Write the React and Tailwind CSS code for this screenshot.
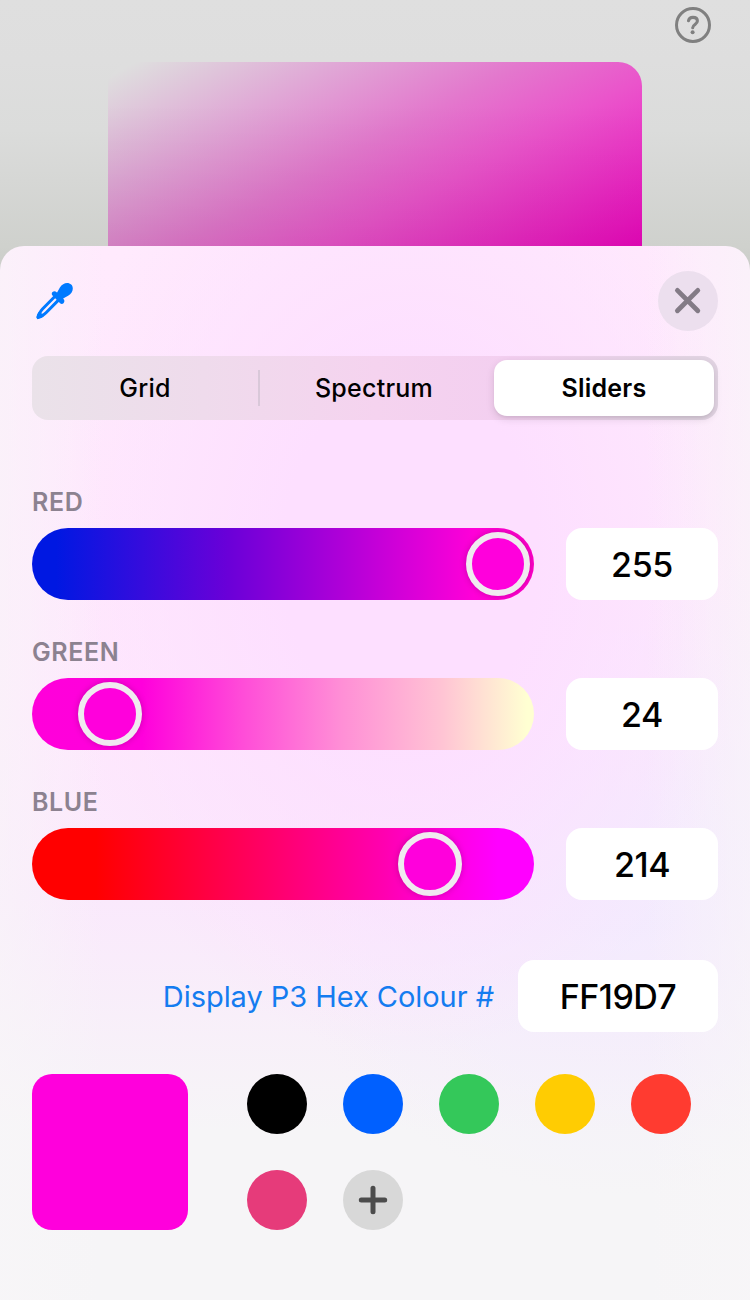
import React from "react";

const channels = [
  {
    name: "RED",
    value: "255",
    track: "bg-[linear-gradient(90deg,#0018e2_0px,#0018e2_24px,#6a00d8_196px,#ff00d8_442px,#ff00c8_502px)]",
    thumb: "left-[434px]",
  },
  {
    name: "GREEN",
    value: "24",
    track: "bg-[linear-gradient(90deg,#ff00da_0px,#ff00dc_110px,#ff4cd8_210px,#ff8fd6_310px,#ffc4d4_410px,#ffffd2_495px)]",
    thumb: "left-[46px]",
  },
  {
    name: "BLUE",
    value: "214",
    track: "bg-[linear-gradient(90deg,#ff0000_0px,#ff0000_64px,#ff0065_232px,#ff00b0_352px,#ff00d8_404px,#ff00ff_466px)]",
    thumb: "left-[366px]",
  },
];

const swatches = ["bg-black", "bg-[#0060ff]", "bg-[#34c85a]", "bg-[#ffcc02]", "bg-[#ff3b30]", "bg-[#e63b7a]"];

function HelpIcon() {
  return (
    <svg width="36" height="36" viewBox="0 0 36 36" fill="none" stroke="#808080" strokeLinecap="round" strokeLinejoin="round">
      <circle cx="18" cy="18" r="16.5" strokeWidth="3" />
      <path d="M13.5 13.8c.4-2.2 2-3.4 4.4-3.4 2.6 0 4.5 1.4 4.5 3.7 0 3.3-4.7 3.4-4.7 6.6" strokeWidth="3.1" />
      <circle cx="17.6" cy="25.3" r="2" fill="#808080" stroke="none" />
    </svg>
  );
}

function DropperIcon() {
  return (
    <svg width="38" height="38" viewBox="0 0 38 38" fill="none">
      <path
        d="M19.6 14.8 7.5 27c-1.5 1.5-2.4 3-3 4.6L3 35.2l3.4-1.4c1.6-.7 3.1-1.6 4.6-3.1L23.2 18.4"
        stroke="#007aff"
        strokeWidth="3"
        strokeLinejoin="round"
      />
      <path
        d="M17.5 10.1c1.3-1.2 2.9-1.1 4.1.1l.5.4 2.8-5c2.8-5.2 8.6-5.9 11.3-3.1 2.8 2.8 2 8.6-3.1 11.3l-5 2.8.4.5c1.2 1.2 1.2 2.8 0 4.1-1 1-2.4 1-3.4 0l-7.6-7.7c-1-1-1-2.4 0-3.4z"
        fill="#007aff"
      />
      <path d="M1.7 34.2c.3-1.5 1.1-3.2 2.5-5l5 4.9c-2 1.8-3.6 2.5-5.9 3-1.3.3-2-1-1.6-2.9z" fill="#007aff" />
    </svg>
  );
}

function Slider({ channel }) {
  return (
    <div className="flex flex-col">
      <div className="h-[38px] text-[25px] leading-6 font-semibold tracking-[0.6px] text-[#8c8290]">{channel.name}</div>
      <div className="flex justify-between">
        <div className={`relative h-[72px] w-[502px] overflow-hidden rounded-full ${channel.track}`}>
          <div className={`absolute top-1 size-16 rounded-full border-[6px] border-[#f0eaf0] bg-[#ff00dc] shadow-[0_0_6px_rgba(60,0,50,0.28)] ${channel.thumb}`} />
        </div>
        <div className="flex h-[72px] w-[152px] items-center justify-center rounded-2xl bg-white text-[34px] font-medium tracking-[-0.4px]">
          {channel.value}
        </div>
      </div>
    </div>
  );
}

export default function App() {
  return (
    <div className="flex h-[1300px] w-[750px] flex-col overflow-hidden bg-[#e0e0e0] font-['Inter',sans-serif] text-black">
      <div className="-mb-6 flex h-[270px] shrink-0 flex-col bg-[linear-gradient(180deg,#dfdfdf_0px,#dedede_60px,#dbdcdb_130px,#d6d7d5_180px,#cfd1cd_246px,#cbcdc9_270px)]">
        <div className="flex h-[62px] justify-end pt-[7px] pr-[39px]">
          <HelpIcon />
        </div>
        <div className="mx-auto h-[208px] w-[534px] rounded-t-[24px] bg-[linear-gradient(180deg,rgba(0,0,0,0)_20%,rgba(0,0,0,0.08)_90%),linear-gradient(152deg,#dedede_3%,#e0a8d6_25%,#e378cd_45%,#ea55cb_61%,#ee00be_98%)]" />
      </div>

      <div className="relative flex h-[1054px] shrink-0 flex-col rounded-t-[24px] bg-[#f6f6f7] bg-[linear-gradient(90deg,rgba(248,246,248,0.6)_0%,rgba(248,246,248,0)_14%,rgba(248,246,248,0)_86%,rgba(248,246,248,0.6)_100%),radial-gradient(ellipse_360px_500px_at_410px_310px,#fddfff_0%,#fddfff_35%,rgba(253,224,255,0)_100%),radial-gradient(ellipse_360px_330px_at_620px_620px,rgba(241,235,255,0.85)_0%,rgba(241,235,255,0)_100%),linear-gradient(180deg,#ffeafd_0%,#fee8fd_45%,#fae9fc_62%,#f6f5f7_84%)] px-8 pt-[25px]">
        <header className="flex h-[60px] items-center justify-between">
          <div className="pl-[3px]">
            <DropperIcon />
          </div>
          <div className="flex size-[60px] items-center justify-center rounded-full bg-[#ecdfee]">
            <svg width="28" height="28" viewBox="0 0 28 28" stroke="#837b86" strokeWidth="4.8" strokeLinecap="round">
              <path d="M3.4 3.4l20.4 20.4M23.8 3.4 3.4 23.8" />
            </svg>
          </div>
        </header>

        <nav className="mt-[25px] flex h-16 shrink-0 items-center rounded-[16px] bg-[linear-gradient(90deg,#eae2e9_0%,#efdbec_25%,#f5d3ef_50%,#f3cff0_70%,#e2d4e3_95%)] p-1 text-[25px] font-medium">
          <div className="flex h-full w-[222px] items-center justify-center pt-px pr-1 tracking-[0.25px]">Grid</div>
          <div className="h-9 w-[2px] bg-[#d9c8d9]" />
          <div className="flex h-full w-[230px] items-center justify-center pt-px pr-0.5 tracking-[0.25px]">Spectrum</div>
          <div className="ml-1 flex h-full flex-1 items-center justify-center rounded-[13px] bg-white pt-px font-semibold tracking-[0.2px] shadow-[0_3px_8px_rgba(0,0,0,0.12),0_2px_2px_rgba(0,0,0,0.04)]">
            Sliders
          </div>
        </nav>

        <div className="mt-[70px] flex flex-col gap-10">
          {channels.map((channel) => (
            <Slider key={channel.name} channel={channel} />
          ))}
        </div>

        <div className="mt-[60px] flex h-[72px] shrink-0 items-center justify-end gap-6">
          <div className="pt-px text-[29px] tracking-[-0.05px] whitespace-nowrap text-[#147cf0]">Display P3 Hex Colour #</div>
          <div className="flex h-full w-[200px] items-center justify-center rounded-2xl bg-white text-[34px] font-medium tracking-[-0.5px]">FF19D7</div>
        </div>

        <div className="mt-[42px] flex">
          <div className="size-[156px] rounded-[20px] bg-[#ff00dc]" />
          <div className="ml-[59px] grid grid-cols-5 gap-9">
            {swatches.map((color) => (
              <div key={color} className={`size-[60px] rounded-full ${color}`} />
            ))}
            <div className="flex size-[60px] items-center justify-center rounded-full bg-[#d8d8d8]">
              <svg width="30" height="30" viewBox="0 0 30 30" stroke="#4c4c4c" strokeWidth="5" strokeLinecap="round">
                <path d="M15 3.3v23.4M3.3 15h23.4" />
              </svg>
            </div>
          </div>
        </div>
      </div>
    </div>
  );
}
